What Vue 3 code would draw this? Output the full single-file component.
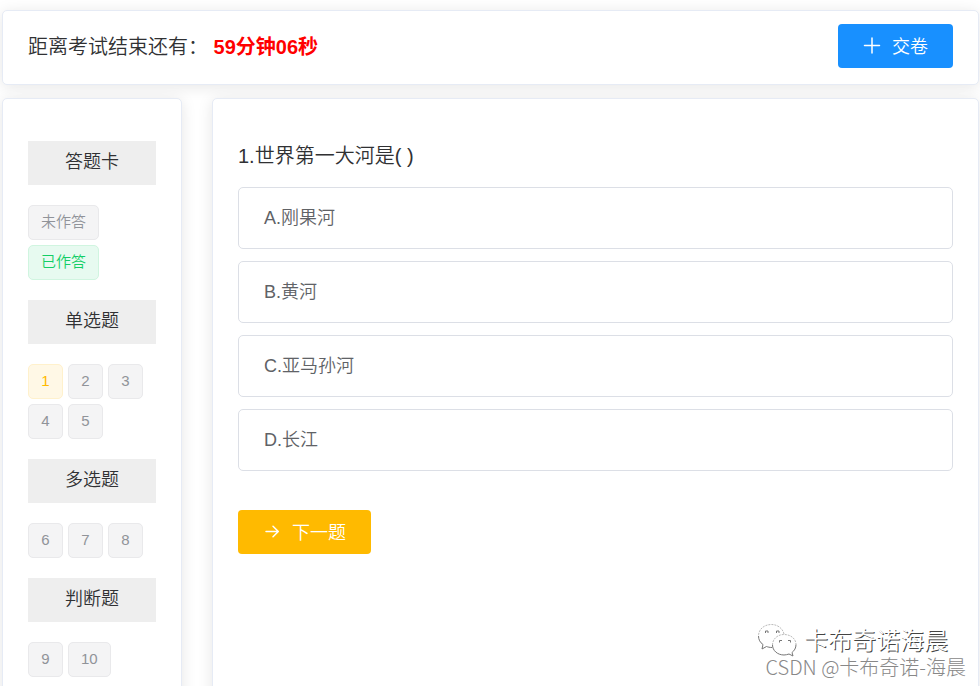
<script setup>
import { ref } from 'vue'

const current = ref(1)
const answer = ref('')
const remaining = '59分钟06秒'

const groups = [
  { title: '单选题', items: [1, 2, 3, 4, 5] },
  { title: '多选题', items: [6, 7, 8] },
  { title: '判断题', items: [9, 10] }
]

const options = [
  { key: 'A', text: '刚果河' },
  { key: 'B', text: '黄河' },
  { key: 'C', text: '亚马孙河' },
  { key: 'D', text: '长江' }
]
</script>

<template>
  <div class="page">
    <header class="card topbar">
      <p class="countdown">距离考试结束还有： <strong>{{ remaining }}</strong></p>
      <button type="button" class="btn primary">
        <svg class="icon" viewBox="0 0 18 18" aria-hidden="true">
          <path d="M9 2v15M1.500 9.500h15" />
        </svg>
        <span>交卷</span>
      </button>
    </header>

    <div class="columns">
      <aside class="card sheet">
        <h2 class="section">答题卡</h2>
        <div class="tags">
          <span class="tag">未作答</span>
          <span class="tag done">已作答</span>
        </div>
        <template v-for="group in groups" :key="group.title">
          <h2 class="section">{{ group.title }}</h2>
          <div class="tags">
            <button
              v-for="n in group.items"
              :key="n"
              type="button"
              class="tag"
              :class="{ active: n === current }"
              @click="current = n"
            >{{ n }}</button>
          </div>
        </template>
      </aside>

      <main class="card question">
        <h1 class="stem">1.世界第一大河是( )</h1>
        <div class="options">
          <label v-for="o in options" :key="o.key" class="option" :class="{ chosen: answer === o.key }">
            <input v-model="answer" type="radio" name="answer" :value="o.key" />
            <span>{{ o.key }}.{{ o.text }}</span>
          </label>
        </div>
        <button type="button" class="btn warning">
          <svg class="icon" viewBox="0 0 18 18" aria-hidden="true">
            <path d="M3 9.500h12M10 4.200L15.300 9.500L10 14.800" />
          </svg>
          <span>下一题</span>
        </button>
      </main>
    </div>

    <div class="watermark">
      <div class="account">
        <svg class="wechat" viewBox="0 0 40 34" aria-hidden="true">
          <path class="faint" d="M27 11C26 6 21 1.500 14.500 1.500C7.500 1.500 1.500 6 1.500 13" />
          <path d="M1.500 13C1.500 16.500 3 19.500 6 21.500L5 26L9.500 23.500C11 24 12.500 24.500 15 24.500" />
          <path class="faint" d="M15.500 22C15.500 16 20.500 11.500 27 11.500C34 11.500 39 16 39 21.500" />
          <path d="M15.500 22C15.500 27.500 20.500 32 27 32C28.500 32 30.500 31.500 32 31L36 33L35 29.500C37.500 27.500 39 25 39 21.500" />
          <path d="M8.500 10v-2h2.500v2M19.500 10v-2h2.500v2M22.500 19.500v-2h2.500M31 17.500h2.500v2" />
        </svg>
        <span>卡布奇诺海晨</span>
      </div>
      <div class="credit">CSDN @卡布奇诺-海晨</div>
    </div>
  </div>
</template>

<style>
body {
  background: #fff;
}
</style>

<style scoped>
.page {
  position: relative;
  box-sizing: border-box;
  display: flex;
  flex-direction: column;
  gap: 13px;
  height: 100vh;
  padding: 10px 1px 0 2px;
  overflow: hidden;
  font-family: "Liberation Sans", "Noto Sans CJK SC", sans-serif;
  font-size: 18px;
  font-weight: 350;
  color: #303133;
}

.card {
  box-sizing: border-box;
  border: 1px solid #e6ebf5;
  border-radius: 5px;
  background: #fff;
  box-shadow: 0 2px 15px rgba(0, 0, 0, 0.1);
}

.topbar {
  display: flex;
  flex: none;
  align-items: center;
  justify-content: space-between;
  padding: 13px 25px 16px;
}

.countdown {
  margin: 0;
  padding-top: 2px;
  font-size: 20px;
  line-height: 28px;
}

.countdown strong {
  font-weight: 700;
  color: #f00;
}

.columns {
  display: flex;
  flex: 1 0 auto;
  gap: 30px;
}

.sheet {
  display: flex;
  flex: none;
  flex-direction: column;
  gap: 20px;
  width: 180px;
  padding: 42px 25px;
}

.section {
  margin: 0;
  padding-bottom: 2px;
  background: #eee;
  font-size: 18px;
  font-weight: 350;
  line-height: 42px;
  text-align: center;
}

.tags {
  display: flex;
  flex-wrap: wrap;
  gap: 5px;
}

.tag {
  box-sizing: border-box;
  min-width: 35px;
  height: 35px;
  padding: 0 12px 2px;
  border: 1px solid #e9e9eb;
  border-radius: 5px;
  background: #f4f4f5;
  font-family: inherit;
  font-size: 15px;
  font-weight: 350;
  line-height: 31px;
  color: #909399;
}

.tag.done {
  border-color: #d0f5e0;
  background: #e7faf0;
  color: #13ce66;
}

.tag.active {
  border-color: #fff1cc;
  background: #fff8e6;
  color: #ffba00;
}

.question {
  flex: 1;
  min-width: 0;
  padding: 43px 25px;
}

.stem {
  margin: 0 0 17px;
  font-size: 20px;
  font-weight: 350;
  line-height: 28px;
}

.options {
  display: flex;
  flex-direction: column;
  gap: 12px;
  margin-bottom: 39px;
}

.option {
  box-sizing: border-box;
  display: flex;
  align-items: center;
  height: 62px;
  padding: 0 25px 4px;
  border: 1px solid #dcdfe6;
  border-radius: 5px;
  color: #606266;
  cursor: pointer;
}

.option.chosen {
  border-color: #1890ff;
  color: #1890ff;
}

.option input {
  width: 0;
  height: 0;
  margin: 0;
  appearance: none;
}

.btn {
  display: inline-flex;
  align-items: center;
  gap: 11px;
  height: 44px;
  padding: 0 25px 2px;
  border: 0;
  border-radius: 4px;
  font-family: inherit;
  font-size: 18px;
  font-weight: 350;
  color: #fff;
  cursor: pointer;
}

.primary {
  background: #1890ff;
}

.warning {
  background: #ffba00;
}

.icon {
  width: 18px;
  height: 18px;
  fill: none;
  stroke: currentColor;
  stroke-width: 1.5;
  stroke-linecap: round;
  stroke-linejoin: round;
}

.watermark {
  position: absolute;
  right: 14px;
  bottom: 7px;
  font-family: "Liberation Sans", "Noto Sans CJK SC", sans-serif;
  text-align: right;
  pointer-events: none;
}

.account {
  display: flex;
  align-items: flex-end;
  justify-content: flex-end;
  gap: 7px;
  height: 24px;
  padding: 0 18px 2px 0;
  font-size: 24px;
  line-height: 24px;
  color: #fff;
  text-shadow: 1px 1px 0 #444;
}

.wechat {
  width: 40px;
  height: 34px;
  margin-bottom: -4px;
  fill: none;
  stroke: #777;
  stroke-width: 1;
}

.wechat .faint {
  stroke: #bbb;
  stroke-dasharray: 2 1;
}

.credit {
  font-family: "Noto Sans CJK SC", sans-serif;
  font-size: 20px;
  font-weight: 300;
  line-height: 24px;
  color: #888;
}
</style>
